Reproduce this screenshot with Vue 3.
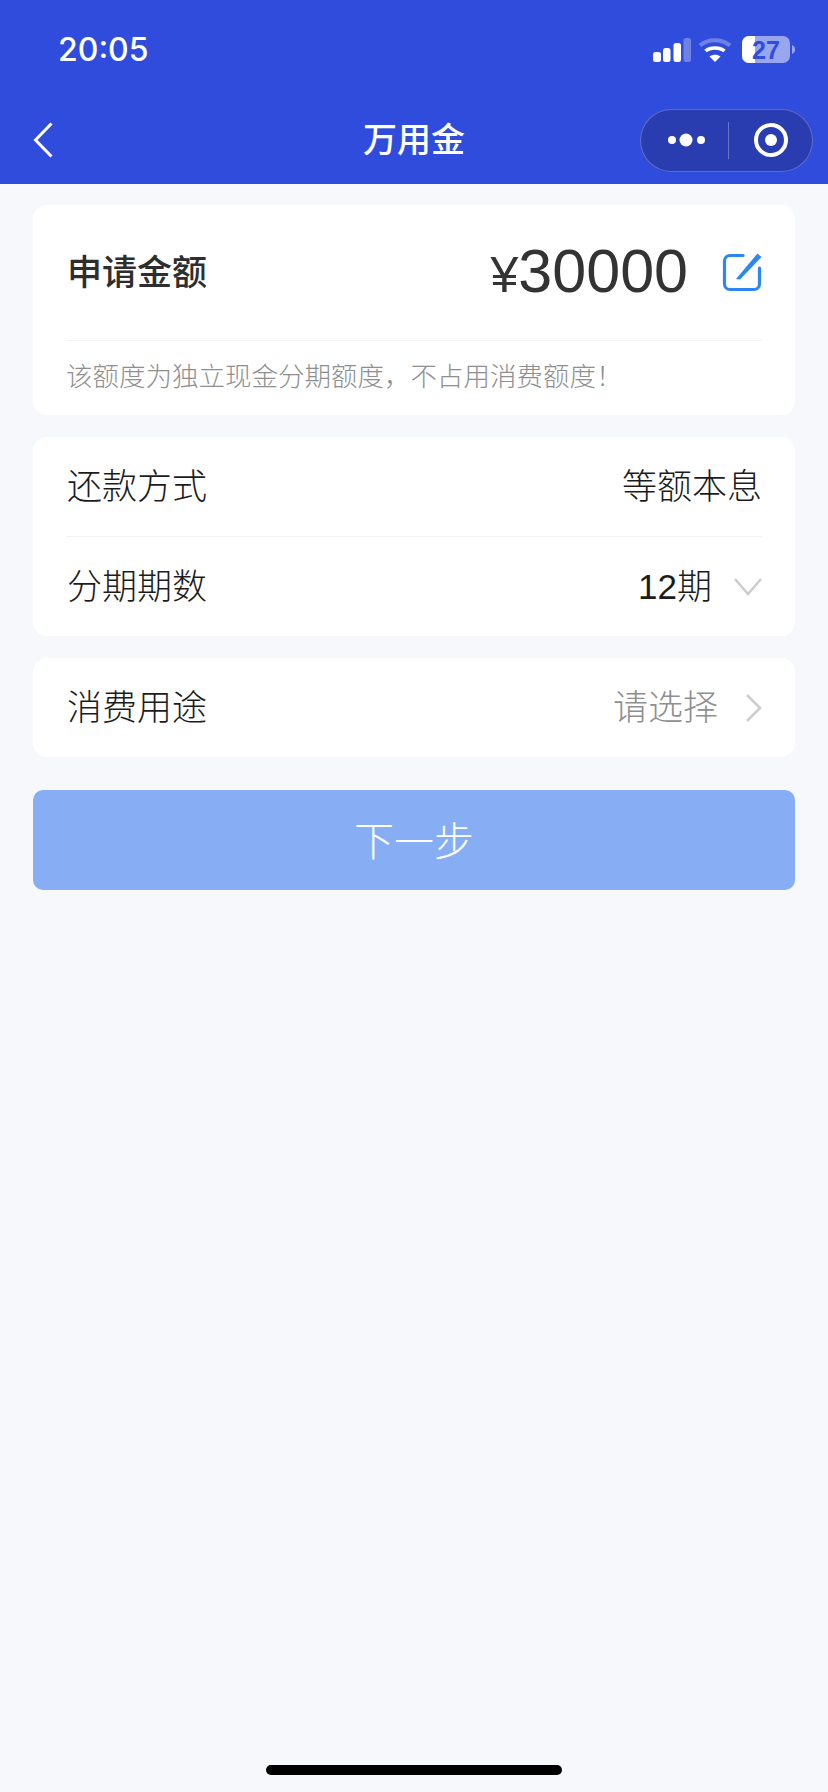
<script setup>
const rows = [
  { label: '还款方式', value: '等额本息' },
  { label: '分期期数', value: '12期', icon: 'down' },
]
</script>

<template>
  <div class="page">
    <header class="top">
      <div class="status">
        <span class="time">20:05</span>
        <svg class="sys" width="150" height="30" viewBox="0 0 150 30">
          <g fill="#fff">
            <rect x="0" y="16" width="8" height="10" rx="2.5" />
            <rect x="10" y="12" width="7.5" height="14" rx="2.5" />
            <rect x="20.5" y="7" width="7.5" height="19" rx="2.5" />
            <rect x="30.5" y="2" width="7.5" height="24" rx="2.5" opacity=".3" />
          </g>
          <path d="M47 9.5 C55 2.5 69 2.5 77 9.5" fill="none" stroke="#fff" stroke-opacity=".3" stroke-width="4.2" />
          <path d="M52.5 15 C57 11 67 11 71.5 15" fill="none" stroke="#fff" stroke-width="3.6" />
          <path d="M62 26 L56.5 20.5 C59.5 18 64.500 18 67.500 20.500 Z" fill="#fff" />
          <rect x="89" y="0" width="48" height="27" rx="7" fill="#fff" fill-opacity=".5" />
          <path d="M96 0 H102 V27 H96 A7 7 0 0 1 89 20 V7 A7 7 0 0 1 96 0 Z" fill="#fff" />
          <path d="M139 9 C141.500 10 142 12 142 13.500 C142 15 141.500 17 139 18 Z" fill="#fff" fill-opacity=".5" />
          <text x="113" y="23" text-anchor="middle" class="batt">27</text>
        </svg>
      </div>
      <nav class="nav">
        <svg class="back" width="20" height="36" viewBox="0 0 20 36">
          <path d="M18.500 1.500 L2.500 18 L18.500 34.500" fill="none" stroke="#fff" stroke-width="3" />
        </svg>
        <h1 class="title">万用金</h1>
        <div class="capsule">
          <svg width="58" height="20" viewBox="0 0 58 20">
            <g fill="#fff">
              <circle cx="9" cy="10" r="4" />
              <circle cx="23" cy="10" r="6.500" />
              <circle cx="38" cy="10" r="4" />
            </g>
          </svg>
          <i class="cap-line"></i>
          <svg width="36" height="36" viewBox="0 0 36 36">
            <circle cx="18" cy="18" r="15" fill="none" stroke="#fff" stroke-width="4" />
            <circle cx="18" cy="18" r="6" fill="#fff" />
          </svg>
        </div>
      </nav>
    </header>

    <main class="body">
      <section class="card amount-card">
        <div class="amount-row">
          <span class="amount-label">申请金额</span>
          <span class="amount"><span class="yen">¥</span>30000</span>
          <svg class="edit" width="40" height="40" viewBox="0 0 40 40">
            <path d="M21 3.500 H8 A5.500 5.500 0 0 0 2.500 9 V32 A5.500 5.500 0 0 0 8 37.500 H32 A5.500 5.500 0 0 0 37.500 32 V16" fill="none" stroke="#2C86F8" stroke-width="3.200" stroke-linecap="round" />
            <path d="M14 27 L35.500 1.500 L39.500 5 L18 27.500 Z" fill="#2C86F8" />
          </svg>
        </div>
        <p class="note">该额度为独立现金分期额度，不占用消费额度！</p>
      </section>

      <section class="card">
        <div v-for="row in rows" :key="row.label" class="row">
          <span>{{ row.label }}</span>
          <span class="value">{{ row.value }}</span>
          <svg v-if="row.icon" class="down" width="30" height="20" viewBox="0 0 30 20">
            <path d="M2 2 L15 17 L28 2" fill="none" stroke="#CDCDCD" stroke-width="2.600" />
          </svg>
        </div>
      </section>

      <section class="card">
        <div class="row">
          <span>消费用途</span>
          <span class="value placeholder">请选择</span>
          <svg class="right" width="18" height="30" viewBox="0 0 18 30">
            <path d="M2 2 L15 15 L2 28" fill="none" stroke="#CDCDCD" stroke-width="2.600" />
          </svg>
        </div>
      </section>

      <button class="next" type="button">下一步</button>
    </main>

    <div class="home"></div>
  </div>
</template>

<style>
html, body { margin: 0; background: #f7f8fc; }
</style>

<style scoped>
.page {
  width: 828px;
  height: 1792px;
  display: flex;
  flex-direction: column;
  background: #f7f8fc;
  font-family: "Liberation Sans", "Noto Sans CJK SC", sans-serif;
  color: #222;
  overflow: hidden;
}
.top { background: #304cdc; height: 184px; color: #fff; }
.status {
  height: 88px;
  display: flex;
  align-items: flex-start;
  justify-content: space-between;
  padding: 0 33px 0 58px;
}
.time {
  font-family: Inter, sans-serif;
  font-size: 32px;
  font-weight: 500;
  line-height: 40px;
  margin-top: 30px;
}
.sys { margin-top: 36px; margin-right: -8px; }
.batt {
  font-family: "Liberation Sans", sans-serif;
  font-size: 25px;
  font-weight: 700;
  fill: #304cdc;
}
.nav {
  box-sizing: border-box;
  height: 96px;
  display: grid;
  grid-template-columns: minmax(0, 1fr) auto minmax(0, 1fr);
  align-items: center;
  padding: 8px 15px 0;
}
.back { margin-left: 18px; }
.title {
  margin: 0;
  font-size: 34px;
  font-weight: 500;
  line-height: 48px;
  letter-spacing: 0;
}
.capsule {
  justify-self: end;
  box-sizing: border-box;
  width: 173px;
  height: 63px;
  display: flex;
  align-items: center;
  gap: 13px;
  padding-left: 22px;
  border: 1.500px solid rgba(255, 255, 255, 0.25);
  border-radius: 32px;
  background: #2a3db0;
}
.cap-line { width: 1px; height: 37px; background: rgba(255, 255, 255, 0.3); margin-left: -6px; margin-right: 11px; }

.body {
  padding: 21px 33px 0;
  display: flex;
  flex-direction: column;
  gap: 22px;
}
.card { background: #fff; border-radius: 14px; padding: 0 33px; }
.amount-card { height: 210px; box-sizing: border-box; }
.amount-row {
  height: 135px;
  display: flex;
  align-items: center;
  border-bottom: 1px solid #f2f3f5;
}
.amount-label {
  flex: 1;
  padding-left: 1px;
  font-size: 35px;
  font-weight: 500;
  line-height: 48px;
  color: #2e2e2e;
}
.amount { font-size: 61px; line-height: 70px; color: #333; margin-right: 34px; }
.yen { font-size: 50px; }
.edit { flex: none; margin-top: -2px; }
.note {
  margin: 0;
  padding-top: 18px;
  font-size: 26.500px;
  font-weight: 300;
  line-height: 36px;
  color: #8f8f8f;
}
.row {
  height: 99px;
  display: flex;
  align-items: center;
  padding-left: 1px;
  font-size: 35px;
  font-weight: 300;
  line-height: 48px;
  color: #1c1c1c;
}
.row + .row { border-top: 1px solid #f2f3f5; }
.row > span:first-child { flex: 1; }
.value { color: #1c1c1c; }
.placeholder { color: #8f8f8f; }
.down { margin-left: 21px; margin-right: -1px; }
.right { margin-left: 27px; margin-right: -1px; }
.next {
  margin-top: 11px;
  height: 100px;
  border: 0;
  border-radius: 10px;
  background: #87aef5;
  color: #fff;
  font-family: inherit;
  font-size: 40px;
  font-weight: 300;
  padding: 0 0 2px;
}
.home {
  width: 296px;
  height: 10px;
  border-radius: 5px;
  background: #000;
  margin: auto auto 17px;
}
</style>
